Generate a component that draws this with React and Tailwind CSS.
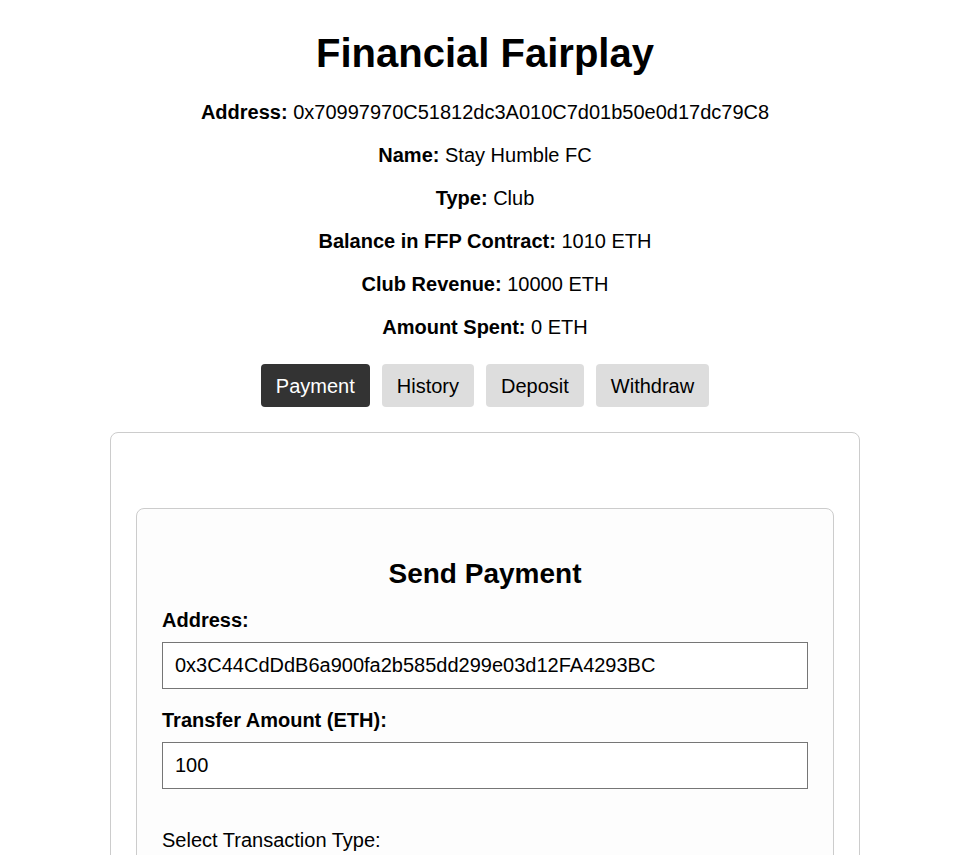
import { useState } from "react";

const info = [
    { label: "Address:", value: "0x70997970C51812dc3A010C7d01b50e0d17dc79C8" },
    { label: "Name:", value: "Stay Humble FC" },
    { label: "Type:", value: "Club" },
    { label: "Balance in FFP Contract:", value: "1010 ETH" },
    { label: "Club Revenue:", value: "10000 ETH" },
    { label: "Amount Spent:", value: "0 ETH" },
];

const tabs = ["Payment", "History", "Deposit", "Withdraw"];

function App() {
    const [tab, setTab] = useState("Payment");
    const [address, setAddress] = useState("0x3C44CdDdB6a900fa2b585dd299e03d12FA4293BC");
    const [amount, setAmount] = useState("100");

    return (
        <div className="min-h-screen bg-white text-black pl-[14px] font-['Liberation_Sans',Arial,sans-serif]">
            <div className="flex flex-col items-center">
                {/* Header */}
                <h1 className="mt-[30px] text-[40px] leading-[46px] font-bold">Financial Fairplay</h1>

                <div className="mt-[25px] flex flex-col items-center gap-5">
                    {info.map((row) => (
                        <p key={row.label} className="text-[20px] leading-[23px]">
                            <b>{row.label}</b> {row.value}
                        </p>
                    ))}
                </div>

                {/* Tabs */}
                <div className="mt-[25px] flex gap-3">
                    {tabs.map((t) => (
                        <button
                            key={t}
                            onClick={() => setTab(t)}
                            className={
                                t === tab
                                    ? "h-[43px] px-[15px] rounded-[4px] text-[20px] bg-[#333333] text-white"
                                    : "h-[43px] px-[15px] rounded-[4px] text-[20px] bg-[#dddddd] text-black"
                            }
                        >
                            {t}
                        </button>
                    ))}
                </div>

                {/* Panel */}
                <div className="mt-[25px] w-[750px] border border-[#cccccc] rounded-[8px] px-[25px] pt-[75px] pb-[25px]">
                    <div className="border border-[#cccccc] rounded-[8px] bg-[#fdfdfd] px-[25px] pt-[49px] pb-[25px]">
                        <h2 className="text-center text-[28px] leading-[32px] font-bold">Send Payment</h2>

                        <label className="block mt-[19px] text-[20px] leading-[23px] font-bold">Address:</label>
                        <input
                            value={address}
                            onChange={(e) => setAddress(e.target.value)}
                            className="mt-[10px] block w-full h-[47px] px-[12px] text-[20px] border border-[#767676] outline-none bg-white"
                        />

                        <label className="block mt-[20px] text-[20px] leading-[23px] font-bold">Transfer Amount (ETH):</label>
                        <input
                            value={amount}
                            onChange={(e) => setAmount(e.target.value)}
                            className="mt-[10px] block w-full h-[47px] px-[12px] text-[20px] border border-[#767676] outline-none bg-white"
                        />

                        <p className="mt-[40px] text-[20px] leading-[23px]">Select Transaction Type:</p>
                        <div className="h-[200px]"></div>
                    </div>
                </div>
            </div>
        </div>
    );
}

export default App;
